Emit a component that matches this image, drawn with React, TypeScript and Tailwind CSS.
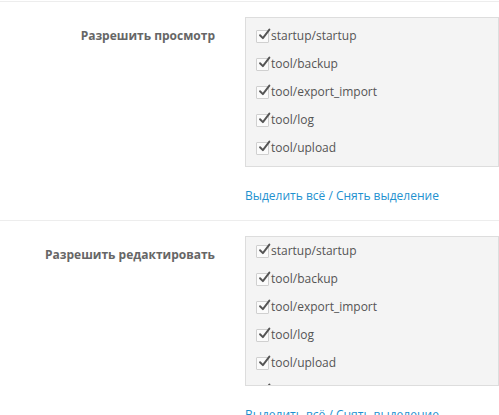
import React from 'react';

const routes = [
  'startup/startup',
  'tool/backup',
  'tool/export_import',
  'tool/log',
  'tool/upload',
  'user/api',
  'user/user',
];

const CheckItem: React.FC<{ label: string }> = ({ label }) => (
  <div className="h-[28px] flex items-center">
    <span className="relative w-[13px] h-[13px] mr-[2px] border border-[#d0d0d0] bg-[#fbfbfb] rounded-[1px] shrink-0">
      <svg viewBox="0 0 16 16" className="absolute -top-[3px] left-[1px] w-[13px] h-[13px]">
        <path d="M2.5 9 L6 12.5 L14 2" fill="none" stroke="#555" strokeWidth="2.4" strokeLinecap="round" strokeLinejoin="round" />
      </svg>
    </span>
    <span className="text-[12px] text-[#555]">{label}</span>
  </div>
);

const PermissionRow: React.FC<{ title: string; pad: string }> = ({ title, pad }) => (
  <div className="flex border-t border-[#ededed] pt-[15px] pb-[15px]">
    <div className="w-[245px] shrink-0 pr-[30px] pt-[10px] text-right text-[12px] font-bold text-[#666]">
      {title}
    </div>
    <div className="flex flex-col">
      <div className={`w-[254px] h-[150px] overflow-hidden border border-[#dddddd] bg-[#f4f4f4] pl-[10px] ${pad}`}>
        {routes.map((r) => (
          <CheckItem key={r} label={r} />
        ))}
      </div>
      <div className="mt-[20px] text-[12px] leading-[18px] text-[#1e91cf]">
        <span>Выделить всё</span> / <span>Снять выделение</span>
      </div>
    </div>
  </div>
);

export default function App() {
  return (
    <div className="w-[499px] h-[415px] overflow-hidden bg-white pt-px" style={{ fontFamily: '"Open Sans", sans-serif' }}>
      <PermissionRow title="Разрешить просмотр" pad="pt-[4px]" />
      <PermissionRow title="Разрешить редактировать" pad="pt-0" />
    </div>
  );
}
